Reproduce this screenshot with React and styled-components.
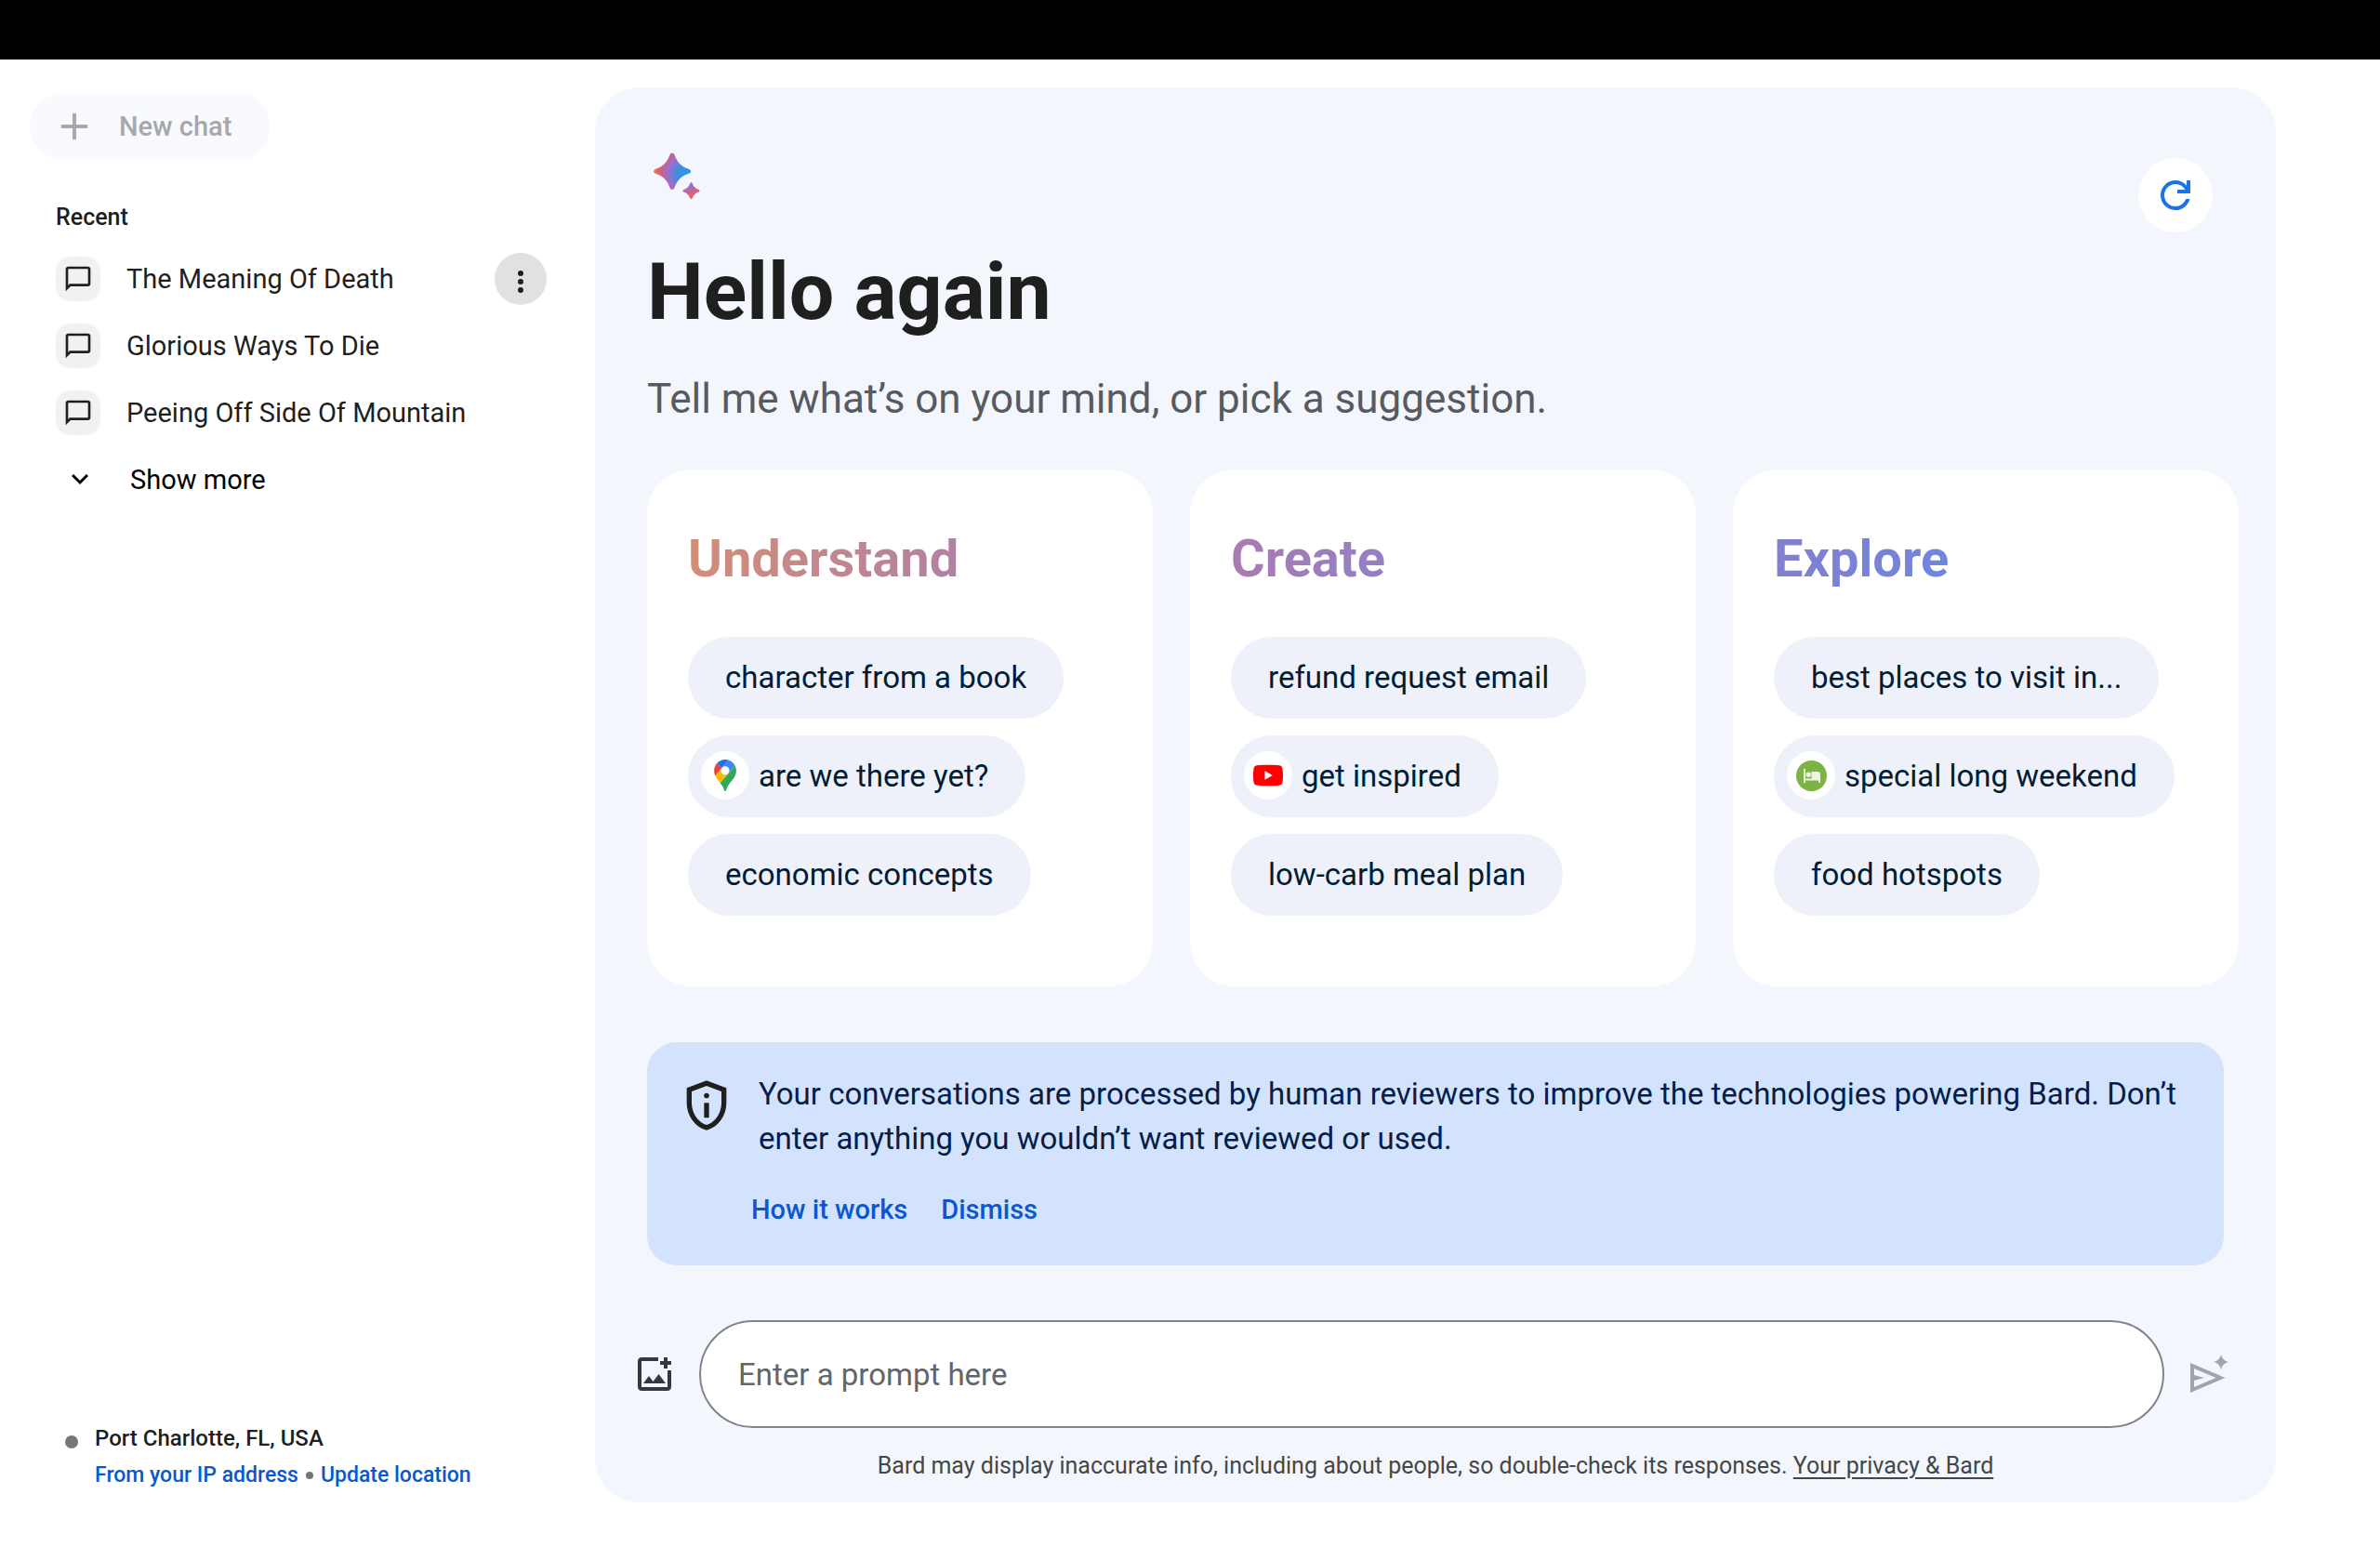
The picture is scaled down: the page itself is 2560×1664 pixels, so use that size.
import { useState } from 'react';
import styled, { createGlobalStyle } from 'styled-components';

const GlobalStyle = createGlobalStyle`
    * {
        box-sizing: border-box;
    }
    body {
        margin: 0;
        background: #fff;
        color: #1f1f1f;
        font-family: Roboto, "Liberation Sans", sans-serif;
    }
    button, input {
        font-family: inherit;
    }
    button {
        border: 0;
        padding: 0;
        background: none;
        color: inherit;
        cursor: pointer;
    }
    svg {
        display: block;
        flex: none;
    }
`;

/* ---------- icons ---------- */

const Icon = ({ size = 48, d }) => (
    <svg width={size} height={size} viewBox="0 0 24 24" fill="currentColor" aria-hidden="true">
        <path d={d} />
    </svg>
);

const ICONS = {
    plus: 'M11 13H5v-2h6V5h2v6h6v2h-6v6h-2Z',
    chat: 'M2 22V4q0-.825.587-1.413Q3.175 2 4 2h16q.825 0 1.413.587Q22 3.175 22 4v12q0 .825-.587 1.413Q20.825 18 20 18H6Zm2-4.825L5.175 16H20V4H4Z',
    more: 'M12 4a2 2 0 1 0 0 4a2 2 0 0 0 0-4Zm0 6a2 2 0 1 0 0 4a2 2 0 0 0 0-4Zm0 6a2 2 0 1 0 0 4a2 2 0 0 0 0-4Z',
    chevron: 'M12 15.4l-6-6L7.4 8l4.6 4.6L16.6 8 18 9.4Z',
    refresh: 'M12 20q-3.35 0-5.675-2.325Q4 15.35 4 12q0-3.35 2.325-5.675Q8.65 4 12 4q1.725 0 3.3.712 1.575.713 2.7 2.038V4h2v7h-7V9h4.2q-.8-1.4-2.188-2.2Q13.625 6 12 6 9.5 6 7.75 7.75T6 12q0 2.5 1.75 4.25T12 18q1.925 0 3.475-1.1T17.65 14h2.1q-.7 2.65-2.85 4.325Q14.75 20 12 20Z',
    shield: 'M12 22q-3.475-.875-5.738-3.988Q4 14.9 4 11.1V5l8-3 8 3v6.1q0 3.8-2.262 6.912Q15.475 21.125 12 22Zm0-2.1q2.6-.825 4.3-3.3 1.7-2.475 1.7-5.5V6.375l-6-2.25-6 2.25V11.1q0 3.025 1.7 5.5 1.7 2.475 4.3 3.3ZM11 17h2v-6h-2Zm1-7.9a1.05 1.05 0 1 0 0-2.1a1.05 1.05 0 0 0 0 2.1Z',
    addImage: 'M5 21q-.825 0-1.413-.587Q3 19.825 3 19V5q0-.825.587-1.413Q4.175 3 5 3h9v2H5v14h14v-9h2v9q0 .825-.587 1.413Q19.825 21 19 21ZM17 9V7h-2V5h2V3h2v2h2v2h-2v2ZM6 17h12l-3.75-5-3 4L9 13Z',
};

const Sparkles = () => (
    <svg width="64" height="64" viewBox="0 0 64 64" aria-hidden="true">
        <defs>
            <radialGradient id="bigStar" gradientUnits="userSpaceOnUse" cx="41" cy="27" r="36">
                <stop offset="0" stopColor="#2699e8" />
                <stop offset=".24" stopColor="#3a8fe0" />
                <stop offset=".5" stopColor="#9a70cf" />
                <stop offset=".72" stopColor="#cc6288" />
                <stop offset=".84" stopColor="#e8615a" />
                <stop offset="1" stopColor="#f3a04a" />
            </radialGradient>
            <linearGradient id="smallStar" x1=".4" y1="0" x2=".6" y2="1">
                <stop offset=".1" stopColor="#8f74d0" />
                <stop offset=".55" stopColor="#c9658d" />
                <stop offset=".9" stopColor="#f0625a" />
            </linearGradient>
        </defs>
        <path
            fill="url(#bigStar)"
            d="M27 4.5c1.500 0 2.200 1 2.700 2.500C32.500 14.500 36.500 18.800 44 21.500c2 .7 3 1.400 3 2.800s-1 2.100-3 2.800C36.500 29.800 32.500 34 29.700 41.500c-.5 1.500-1.200 2.500-2.700 2.500s-2.200-1-2.700-2.500C21.500 34 17.500 29.800 10 27.100c-2-.7-3-1.400-3-2.800s1-2.100 3-2.800C17.500 18.800 21.500 14.500 24.300 7c.5-1.500 1.200-2.500 2.700-2.500Z"
        />
        <path
            fill="url(#smallStar)"
            d="M47.500 36.300c.7 0 1 .5 1.300 1.200 1.200 3.200 3 5 6.200 6.300 1 .4 1.500.8 1.500 1.500s-.5 1.100-1.500 1.500c-3.200 1.300-5 3.100-6.200 6.300-.3.700-.6 1.200-1.300 1.200s-1-.5-1.300-1.200c-1.200-3.200-3-5-6.200-6.300-1-.4-1.500-.8-1.500-1.500s.5-1.100 1.500-1.500c3.200-1.300 5-3.100 6.200-6.300.3-.7.600-1.200 1.300-1.200Z"
        />
    </svg>
);

const MapsPin = () => (
    <svg width="24" height="34" viewBox="0 0 92.300 132.300" aria-hidden="true">
        <path fill="#1a73e8" d="M60.200 2.200C55.800.8 51 0 46.100 0 32 0 19.300 6.400 10.800 16.500l21.800 18.300L60.200 2.200z" />
        <path fill="#ea4335" d="M10.800 16.500C4.100 24.500 0 34.900 0 46.100c0 8.700 1.700 15.700 4.600 22l28-33.300-21.800-18.300z" />
        <path fill="#4285f4" d="M46.200 28.500c9.800 0 17.700 7.900 17.700 17.700 0 4.300-1.600 8.300-4.200 11.400 0 0 13.900-16.600 27.500-32.700-5.600-10.800-15.300-19-27-22.700L32.600 34.800c3.300-3.800 8.100-6.300 13.600-6.300" />
        <path fill="#fbbc04" d="M46.200 63.800c-9.800 0-17.700-7.900-17.700-17.700 0-4.300 1.500-8.300 4.100-11.300l-28 33.300c4.800 10.600 12.800 19.200 21 29.900l34.100-40.500c-3.300 3.900-8.100 6.300-13.500 6.300" />
        <path fill="#34a853" d="M59.100 109.200c15.400-24.100 33.300-35 33.300-63 0-7.700-1.900-14.900-5.200-21.300L25.600 98c2.600 3.400 5.300 7.300 7.900 11.300 9.400 14.500 6.800 23.100 12.800 23.100s3.400-8.700 12.800-23.200" />
    </svg>
);

const YouTube = () => (
    <svg width="32" height="24" viewBox="0 0 32 24" aria-hidden="true">
        <path fill="#f00" d="M4 1.200C7 .5 25 .5 28 1.200c2 .4 3 1.500 3.400 3.300.8 3.500.8 11.500 0 15-.4 1.800-1.400 2.900-3.400 3.300-3 .7-21 .7-24 0-2-.4-3-1.500-3.400-3.300-.8-3.500-.8-11.500 0-15C1 2.700 2 1.600 4 1.200Z" />
        <path fill="#fff" d="M12.500 7.300v9.400l8.300-4.700Z" />
    </svg>
);

const Hotels = () => (
    <svg width="33" height="33" viewBox="0 0 33 33" aria-hidden="true">
        <circle cx="16.500" cy="16.500" r="16.500" fill="#7cb342" />
        <path fill="#eef3e6" d="M8 9h2v10.500h6.500V12H23q3 0 3 3v9h-2v-2.500H10V24H8Z" />
        <circle cx="13.300" cy="15.300" r="2.700" fill="#eef3e6" />
    </svg>
);

const SendSparkle = () => (
    <svg width="48" height="48" viewBox="0 0 48 48" fill="currentColor" aria-hidden="true">
        <path fillRule="evenodd" d="M4 12l37.500 16L4 44ZM8 18v7l11 3-11 3v7l23.500-10Z" />
        <path d="M37 3q1.500 6.500 8 8-6.500 1.500-8 8-1.500-6.500-8-8 6.500-1.500 8-8Z" />
    </svg>
);

/* ---------- layout ---------- */

const Page = styled.div`
    display: flex;
    flex-direction: column;
    min-height: 100vh;
`;

const TopBar = styled.div`
    height: 64px;
    background: #000;
`;

const Body = styled.div`
    flex: 1;
    display: flex;
`;

const Sidebar = styled.aside`
    width: 25%;
    min-width: 560px;
    padding: 36px 52px 58px 32px;
    display: flex;
    flex-direction: column;
    align-items: flex-start;
`;

const Panel = styled.main`
    flex: 1;
    min-width: 0;
    margin: 30px 112px 48px 0;
    padding: 66px 40px 23px;
    display: flex;
    flex-direction: column;
    border-radius: 48px;
    background: #f3f6fd;
`;

/* ---------- sidebar ---------- */

const NewChat = styled.button`
    display: flex;
    align-items: center;
    gap: 24px;
    height: 72px;
    padding: 0 42px 0 24px;
    border-radius: 36px;
    background: #f9fafe;
    color: #a6a8ab;
    font-size: 29px;
    font-weight: 500;
`;

const RecentTitle = styled.h2`
    margin: 46px 0 14px;
    padding-left: 28px;
    font-size: 25px;
    line-height: 32px;
    font-weight: 500;
`;

const ChatList = styled.ul`
    align-self: stretch;
    margin: 0;
    padding: 0 0 0 28px;
    list-style: none;
`;

const ChatItem = styled.li`
    display: flex;
    align-items: center;
    justify-content: space-between;
    height: 72px;
`;

const ChatLink = styled.button`
    display: flex;
    align-items: center;
    gap: 28px;
    font-size: 29px;
    line-height: 40px;
    color: ${({ $strong }) => ($strong ? '#000' : '#1f1f1f')};
`;

const IconTile = styled.span`
    display: flex;
    align-items: center;
    justify-content: center;
    width: 48px;
    height: 48px;
    border-radius: 16px;
    background: #f1f1f1;
`;

const IconSlot = styled.span`
    display: flex;
    justify-content: center;
    width: 52px;
`;

const MoreButton = styled.button`
    display: flex;
    align-items: center;
    justify-content: center;
    width: 56px;
    height: 56px;
    padding-top: 6px;
    border-radius: 50%;
    background: #e1e1e1;
`;

const Location = styled.div`
    display: flex;
    align-items: flex-start;
    gap: 18px;
    margin-top: auto;
    padding-left: 38px;
    font-size: 24px;
    line-height: 39px;
    font-weight: 500;
`;

const Dot = styled.span`
    width: 14px;
    height: 14px;
    margin-top: 16px;
    border-radius: 50%;
    background: #757775;
`;

const LocationLinks = styled.div`
    display: flex;
    align-items: center;
    gap: 8px;
    font-size: 23px;

    a {
        color: #0b57d0;
        text-decoration: none;
    }
    span {
        width: 8px;
        height: 8px;
        border-radius: 50%;
        background: #757775;
    }
`;

/* ---------- main panel ---------- */

const Content = styled.div`
    padding-left: 16px;
`;

const Header = styled.div`
    display: flex;
    justify-content: space-between;
    height: 90px;
    padding-right: 28px;
`;

const RefreshButton = styled.button`
    align-self: flex-end;
    display: flex;
    align-items: center;
    justify-content: center;
    width: 80px;
    height: 80px;
    border-radius: 50%;
    background: #fff;
    color: #1a73e8;
`;

const Title = styled.h1`
    margin: 14px 0 0;
    font-size: 86px;
    line-height: 100px;
    font-weight: 700;
`;

const Subtitle = styled.p`
    margin: 37px 0 48px;
    font-size: 44px;
    line-height: 56px;
    color: #575b5f;
`;

const Cards = styled.div`
    display: grid;
    grid-template-columns: repeat(3, 1fr);
    gap: 40px;
`;

const Card = styled.section`
    padding: 64px 44px 76px;
    border-radius: 48px;
    background: #fff;
`;

const CardTitle = styled.h2`
    width: fit-content;
    margin: 0 0 52px;
    font-size: 56px;
    line-height: 64px;
    font-weight: 700;
    color: transparent;
    background: linear-gradient(100deg, ${({ $from }) => $from}, ${({ $to }) => $to});
    background-clip: text;
    -webkit-background-clip: text;
`;

const Chips = styled.div`
    display: flex;
    flex-direction: column;
    align-items: flex-start;
    gap: 18px;
`;

const Chip = styled.button`
    display: flex;
    align-items: center;
    gap: 10px;
    height: 88px;
    padding: 0 40px 2px ${({ $withIcon }) => ($withIcon ? 14 : 40)}px;
    border-radius: 44px;
    background: #eef1f9;
    color: #001d35;
    font-size: 33px;
    white-space: nowrap;
`;

const ChipIcon = styled.span`
    display: flex;
    align-items: center;
    justify-content: center;
    width: 52px;
    height: 52px;
    border-radius: 50%;
    background: #fff;
`;

const Notice = styled.div`
    display: flex;
    align-items: flex-start;
    gap: 14px;
    margin: 60px 16px 0 0;
    padding: 32px 40px 40px 32px;
    border-radius: 32px;
    background: #d3e3fd;
    color: #1f1f1f;

    > svg {
        margin-top: 4px;
    }
`;

const NoticeText = styled.p`
    margin: 0 0 32px;
    padding-left: 10px;
    font-size: 33px;
    line-height: 48px;
    color: #041e49;
`;

const NoticeActions = styled.div`
    display: flex;
    gap: 36px;
    padding-left: 2px;
`;

const actionStyle = `
    font-size: 29px;
    line-height: 40px;
    font-weight: 500;
    color: #0b57d0;
    text-decoration: none;
`;

const ActionLink = styled.a`${actionStyle}`;
const ActionButton = styled.button`${actionStyle}`;

const PromptRow = styled.form`
    display: flex;
    align-items: center;
    gap: 24px;
    margin-top: auto;
    padding-right: 8px;
`;

const IconButton = styled.button`
    color: ${({ $muted }) => ($muted ? '#a1a4a9' : '#343840')};
`;

const PromptInput = styled.input`
    flex: 1;
    min-width: 0;
    height: 116px;
    padding: 0 40px;
    border: 2px solid #80858c;
    border-radius: 58px;
    background: #fff;
    color: #1f1f1f;
    font-size: 33px;
    outline: none;

    &::placeholder {
        color: #636669;
        opacity: 1;
    }
`;

const Disclaimer = styled.p`
    margin: 25px 0 0;
    text-align: center;
    font-size: 25px;
    line-height: 32px;
    color: #444746;

    a {
        color: inherit;
        text-underline-offset: 4px;
        text-decoration-thickness: 2px;
    }
`;

const chats = ['The Meaning Of Death', 'Glorious Ways To Die', 'Peeing Off Side Of Mountain'];

const cards = [
    {
        title: 'Understand',
        from: '#d48d76',
        to: '#b181a4',
        chips: [
            { label: 'character from a book' },
            { label: 'are we there yet?', icon: <MapsPin /> },
            { label: 'economic concepts' },
        ],
    },
    {
        title: 'Create',
        from: '#aa7bb1',
        to: '#937fc5',
        chips: [
            { label: 'refund request email' },
            { label: 'get inspired', icon: <YouTube /> },
            { label: 'low-carb meal plan' },
        ],
    },
    {
        title: 'Explore',
        from: '#857fcd',
        to: '#6e86de',
        chips: [
            { label: 'best places to visit in...' },
            { label: 'special long weekend', icon: <Hotels /> },
            { label: 'food hotspots' },
        ],
    },
];

export default function App() {
    const [prompt, setPrompt] = useState('');
    const [showNotice, setShowNotice] = useState(true);

    return (
        <Page>
            <GlobalStyle />
            <TopBar />
            <Body>
                <Sidebar>
                    <NewChat type="button">
                        <Icon d={ICONS.plus} />
                        New chat
                    </NewChat>
                    <RecentTitle>Recent</RecentTitle>
                    <ChatList>
                        {chats.map((chat, index) => (
                            <ChatItem key={chat}>
                                <ChatLink type="button">
                                    <IconTile><Icon size={32} d={ICONS.chat} /></IconTile>
                                    {chat}
                                </ChatLink>
                                {index === 0 ? (
                                    <MoreButton type="button" aria-label="More options">
                                        <Icon size={36} d={ICONS.more} />
                                    </MoreButton>
                                ) : null}
                            </ChatItem>
                        ))}
                        <ChatItem>
                            <ChatLink type="button" $strong>
                                <IconSlot><Icon size={36} d={ICONS.chevron} /></IconSlot>
                                Show more
                            </ChatLink>
                        </ChatItem>
                    </ChatList>
                    <Location>
                        <Dot />
                        <div>
                            <div>Port Charlotte, FL, USA</div>
                            <LocationLinks>
                                <a href="#ip">From your IP address</a>
                                <span />
                                <a href="#location">Update location</a>
                            </LocationLinks>
                        </div>
                    </Location>
                </Sidebar>

                <Panel>
                    <Content>
                        <Header>
                            <Sparkles />
                            <RefreshButton type="button" aria-label="Refresh suggestions">
                                <Icon d={ICONS.refresh} />
                            </RefreshButton>
                        </Header>
                        <Title>Hello again</Title>
                        <Subtitle>Tell me what’s on your mind, or pick a suggestion.</Subtitle>
                        <Cards>
                            {cards.map(({ title, from, to, chips }) => (
                                <Card key={title}>
                                    <CardTitle $from={from} $to={to}>{title}</CardTitle>
                                    <Chips>
                                        {chips.map(({ label, icon }) => (
                                            <Chip type="button" key={label} $withIcon={!!icon} onClick={() => setPrompt(label)}>
                                                {icon ? <ChipIcon>{icon}</ChipIcon> : null}
                                                {label}
                                            </Chip>
                                        ))}
                                    </Chips>
                                </Card>
                            ))}
                        </Cards>
                        {showNotice ? (
                            <Notice>
                                <Icon size={64} d={ICONS.shield} />
                                <div>
                                    <NoticeText>
                                        Your conversations are processed by human reviewers to improve the technologies
                                        powering Bard. Don’t enter anything you wouldn’t want reviewed or used.
                                    </NoticeText>
                                    <NoticeActions>
                                        <ActionLink href="#how-it-works">How it works</ActionLink>
                                        <ActionButton type="button" onClick={() => setShowNotice(false)}>Dismiss</ActionButton>
                                    </NoticeActions>
                                </div>
                            </Notice>
                        ) : null}
                    </Content>
                    <PromptRow onSubmit={(e) => e.preventDefault()}>
                        <IconButton type="button" aria-label="Upload image">
                            <Icon d={ICONS.addImage} />
                        </IconButton>
                        <PromptInput
                            aria-label="Enter a prompt here"
                            placeholder="Enter a prompt here"
                            value={prompt}
                            onChange={(e) => setPrompt(e.target.value)}
                        />
                        <IconButton type="submit" aria-label="Send" $muted>
                            <SendSparkle />
                        </IconButton>
                    </PromptRow>
                    <Disclaimer>
                        Bard may display inaccurate info, including about people, so double-check its responses.{' '}
                        <a href="#privacy">Your privacy &amp; Bard</a>
                    </Disclaimer>
                </Panel>
            </Body>
        </Page>
    );
}
